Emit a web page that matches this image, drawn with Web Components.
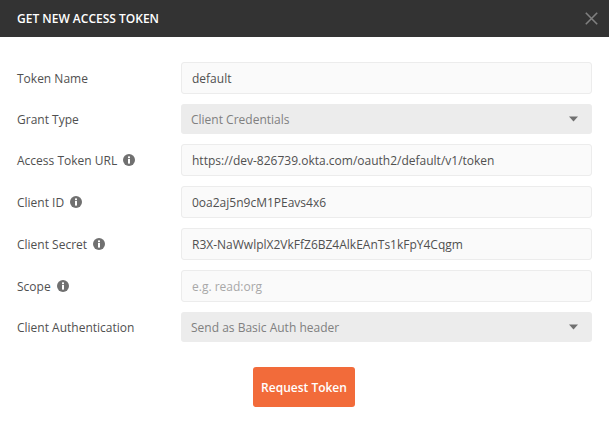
<!DOCTYPE html>
<html>
<head>
<meta charset="utf-8">
<title>Get new access token</title>
<style>
  html, body { margin: 0; background: #fff; }
  body { font-family: "Open Sans", sans-serif; font-size: 12px; }
</style>
</head>
<body>
<token-dialog>
  <form-row label="Token Name"><text-field value="default"></text-field></form-row>
  <form-row label="Grant Type"><select-field value="Client Credentials"></select-field></form-row>
  <form-row label="Access Token URL" info><text-field value="https://dev-826739.okta.com/oauth2/default/v1/token"></text-field></form-row>
  <form-row label="Client ID" info><text-field value="0oa2aj5n9cM1PEavs4x6"></text-field></form-row>
  <form-row label="Client Secret" info><text-field value="R3X-NaWwlplX2VkFfZ6BZ4AlkEAnTs1kFpY4Cqgm"></text-field></form-row>
  <form-row label="Scope" info><text-field placeholder="e.g. read:org"></text-field></form-row>
  <form-row label="Client Authentication"><select-field value="Send as Basic Auth header"></select-field></form-row>
</token-dialog>
<script>
class TokenDialog extends HTMLElement {
  constructor() {
    super();
    this.attachShadow({ mode: 'open' });
    this.shadowRoot.innerHTML = `
      <style>
        :host { display: block; width: 609px; height: 422px; overflow: hidden; background: #fff; }
        .header {
          height: 37px; background: #333; color: #fff;
          display: flex; align-items: center; justify-content: space-between;
          padding: 0 11px 0 17px;
          font-size: 12px; font-weight: 600;
        }
        .header svg { display: block; }
        .body { display: flex; flex-direction: column; gap: 10px; padding: 25px 17px 0; }
        .footer { display: flex; padding: 25px 0 0 253px; }
        button {
          width: 102px; height: 40px; border: 0; border-radius: 3px; padding: 0;
          background: #f26b3a; color: #fff;
          font: 600 12px "Open Sans", sans-serif;
        }
      </style>
      <div class="header">
        <span>GET NEW ACCESS TOKEN</span>
        <svg width="13" height="13" viewBox="0 0 13 13"><path d="M.8.8l11.4 11.4M12.2.8L.8 12.2" stroke="#808080" stroke-width="1.6" fill="none"/></svg>
      </div>
      <div class="body"><slot></slot></div>
      <div class="footer"><button type="button">Request Token</button></div>
    `;
  }
}

class FormRow extends HTMLElement {
  constructor() {
    super();
    this.attachShadow({ mode: 'open' });
  }

  connectedCallback() {
    const info = this.hasAttribute('info') ? `
      <svg width="12" height="12" viewBox="0 0 12 12">
        <circle cx="6" cy="6" r="6" fill="#707070"/>
        <rect x="5" y="2.4" width="2" height="1.8" fill="#fff"/>
        <rect x="5" y="5" width="2" height="4.6" fill="#fff"/>
      </svg>` : '';
    this.shadowRoot.innerHTML = `
      <style>
        :host { display: grid; grid-template-columns: 164px 411px; align-items: center; }
        .label { display: flex; align-items: center; gap: 6px; color: #505050; font-size: 12px; }
        svg { display: block; }
      </style>
      <div class="label"><span>${this.getAttribute('label')}</span>${info}</div>
      <slot></slot>
    `;
  }
}

class TextField extends HTMLElement {
  constructor() {
    super();
    this.attachShadow({ mode: 'open' });
  }

  connectedCallback() {
    const value = this.getAttribute('value');
    const text = value || this.getAttribute('placeholder');
    this.shadowRoot.innerHTML = `
      <style>
        :host {
          display: flex; align-items: center; box-sizing: border-box; height: 32px;
          padding: 0 10px; background: #fafafa; border: 1px solid #ececec; border-radius: 3px;
          font-size: 12px; color: #505050; white-space: nowrap;
        }
        .placeholder { color: #a8a8a8; }
      </style>
      <span class="${value ? '' : 'placeholder'}">${text}</span>
    `;
  }
}

class SelectField extends HTMLElement {
  constructor() {
    super();
    this.attachShadow({ mode: 'open' });
  }

  connectedCallback() {
    this.shadowRoot.innerHTML = `
      <style>
        :host {
          display: flex; align-items: center; justify-content: space-between; box-sizing: border-box;
          height: 30px; padding: 0 14px 0 10px; background: #ececec; border-radius: 3px;
          font-size: 12px; color: #808080;
        }
        svg { display: block; }
      </style>
      <span>${this.getAttribute('value')}</span>
      <svg width="9" height="6" viewBox="0 0 9 6"><path d="M0 .5h9L4.5 5.5z" fill="#707070"/></svg>
    `;
  }
}

customElements.define('token-dialog', TokenDialog);
customElements.define('form-row', FormRow);
customElements.define('text-field', TextField);
customElements.define('select-field', SelectField);
</script>
</body>
</html>
